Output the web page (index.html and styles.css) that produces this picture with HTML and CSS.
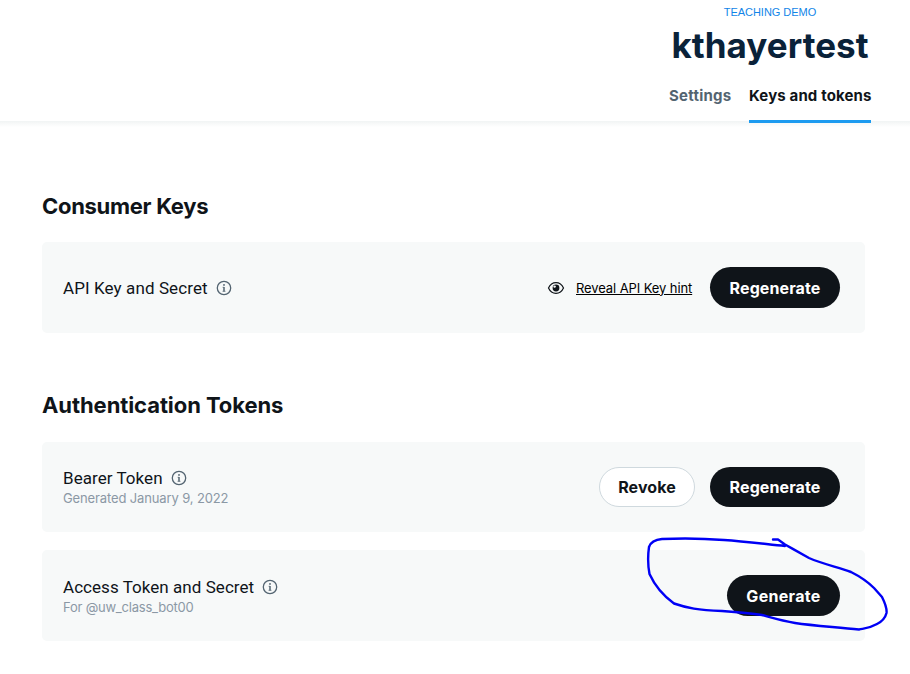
FILE: index.html
```html
<!DOCTYPE html>
<html lang="en">
<head>
<meta charset="utf-8">
<title>kthayertest</title>
<link rel="stylesheet" href="styles.css">
</head>
<body>
<svg class="defs" aria-hidden="true">
  <symbol id="info" viewBox="0 0 16 16">
    <circle cx="8" cy="8" r="6.7" fill="none" stroke="currentColor" stroke-width="1.3"/>
    <path d="M8 7v4.500" fill="none" stroke="currentColor" stroke-width="1.500"/>
    <path d="M6.600 7.300h1.400M6.500 11.300h3" fill="none" stroke="currentColor" stroke-width=".7"/>
    <circle cx="8" cy="4.900" r=".95" fill="currentColor"/>
  </symbol>
</svg>
<header class="header">
  <div class="project">
    <a class="crumb">TEACHING DEMO</a>
    <h1 class="title">kthayertest</h1>
    <nav class="tabs">
      <a class="tab tab-settings">Settings</a>
      <a class="tab tab-active">Keys and tokens</a>
    </nav>
  </div>
</header>
<main class="main">
  <section class="section">
    <h2 class="heading heading-consumer">Consumer Keys</h2>
    <div class="card">
      <div class="label">
        <div class="name"><span class="t-api">API Key and Secret</span><svg class="info"><use href="#info"/></svg></div>
      </div>
      <div class="actions">
        <svg class="eye" viewBox="0 0 18 14"><path d="M1.500 7C3.200 3.300 5.600 1.700 9 1.700S14.800 3.300 16.500 7C14.800 10.700 12.400 12.300 9 12.300S3.200 10.700 1.500 7Z" fill="none" stroke="#0f1419" stroke-width="1.200"/><circle cx="9" cy="7" r="3.400" fill="#0f1419"/><circle cx="7.600" cy="5.600" r="1.200" fill="#f7f9f9"/></svg>
        <a class="hint">Reveal API Key hint</a>
        <button class="btn btn-dark">Regenerate</button>
      </div>
    </div>
  </section>
  <section class="section">
    <h2 class="heading heading-auth">Authentication Tokens</h2>
    <div class="card card-bearer">
      <div class="label">
        <div class="name"><span class="t-bearer">Bearer Token</span><svg class="info"><use href="#info"/></svg></div>
        <div class="meta">Generated January 9, 2022</div>
      </div>
      <div class="actions">
        <button class="btn btn-light">Revoke</button>
        <button class="btn btn-dark">Regenerate</button>
      </div>
    </div>
    <div class="card card-access">
      <div class="label">
        <div class="name"><span class="t-access">Access Token and Secret</span><svg class="info"><use href="#info"/></svg></div>
        <div class="meta meta-for">For @uw_class_bot00</div>
      </div>
      <div class="actions">
        <button class="btn btn-dark btn-generate">Generate</button>
      </div>
    </div>
  </section>
</main>
<svg class="scribble" viewBox="640 530 260 110" aria-hidden="true">
  <path d="M773 539.500H778L785 544.500C793 549 800 553 809 558C823 564 837 567 851 572C861 577 869 583 874 588L882 597C885 603 887 609 886.500 613C885 619 881 622 877 624C870 628 867 628 859 629.500C837 627 815 626 795 623C783 621 773 618 762 615C750 613 737 612 722 611C698 610 687 608 674 603.500C665 597 655 586 649.500 574C648 566 648 554 649 547C651 541 656 539.500 662 539C685 538 705 538.500 724 540C745 541.500 765 544 785 546L784 544"/>
</svg>
</body>
</html>
```

FILE: styles.css
```css
* { box-sizing: border-box; }
body { margin: 0; height: 674px; overflow: hidden; background: #fff; color: #0f1419; font-family: Roboto, "Liberation Sans", sans-serif; }
h1, h2 { margin: 0; font-weight: 700; }
.defs { position: absolute; width: 0; height: 0; }
.header { height: 121px; display: flex; justify-content: flex-end; padding-right: 39px; }
.project { display: flex; flex-direction: column; align-items: center; width: 202px; }
.crumb { margin-top: 5px; font: 11px/15px "Liberation Sans", sans-serif; letter-spacing: -.03px; color: #1185e8; white-space: nowrap; }
.title { margin-top: 3px; font: 700 35px/44px Inter, sans-serif; letter-spacing: .05px; color: #0a2239; white-space: nowrap; }
.tabs { display: flex; justify-content: space-between; width: 100%; margin-top: 16px; position: relative; z-index: 1; }
.tab { height: 40px; font: 700 15px/26px Inter, sans-serif; letter-spacing: .14px; color: #536471; white-space: nowrap; }
.tab-settings { letter-spacing: .25px; }
.tab-active { width: 122px; color: #0f1419; border-bottom: 3px solid #1d9bf0; }
.main { padding: 70px 45px 0 42px; background: linear-gradient(#f1f4f4, #fff) no-repeat 0 0 / 100% 6px; }
.section + .section { margin-top: 57px; }
.heading { height: 51px; font: 700 22px/31px Inter, sans-serif; letter-spacing: -.3px; white-space: nowrap; }
.section + .section .heading { height: 52px; letter-spacing: -.08px; }
.card { display: flex; align-items: center; justify-content: space-between; height: 90px; padding: 0 25px 0 21px; background: #f7f9f9; border-radius: 5px; }
.section:first-child .card { height: 91px; }
.section .card-access { margin-top: 18px; height: 91px; }
.name { display: flex; align-items: center; height: 20px; font-size: 17px; line-height: 20px; white-space: nowrap; }
.t-api { letter-spacing: .1px; }
.t-bearer, .t-access { letter-spacing: .05px; }
.info { width: 16px; height: 16px; margin-left: 8px; color: #536471; }
.meta { height: 20px; font: 400 13px/20px Inter, sans-serif; letter-spacing: -.13px; color: #8b98a5; white-space: nowrap; }
.meta-for { letter-spacing: -.22px; }
.card-access .label { padding-top: 3px; }
.card-bearer .label { padding-top: 1px; }
.actions { display: flex; align-items: center; }
.eye { width: 18px; height: 14px; margin-right: 11px; }
.hint { margin-right: 18px; width: 116px; font: 400 13px/20px Inter, sans-serif; letter-spacing: -.1px; color: #000; text-decoration: underline; text-underline-offset: 1px; white-space: nowrap; }
.btn { display: flex; align-items: center; justify-content: center; width: 130px; height: 41px; padding: 0; border: 0; border-radius: 21px; font: 700 16px/20px Inter, sans-serif; letter-spacing: .1px; white-space: nowrap; }
.card-bearer .btn { height: 40px; }
.btn-dark { background: #0f1419; color: #fff; }
.btn-light { width: 96px; margin-right: 15px; background: #fff; color: #0f1419; border: 1px solid #cfd9de; }
.btn-generate { width: 113px; letter-spacing: .3px; }
.scribble { position: absolute; left: 640px; top: 530px; width: 260px; height: 110px; fill: none; stroke: #0000f5; stroke-width: 2.4; stroke-linecap: round; stroke-linejoin: round; }
```
